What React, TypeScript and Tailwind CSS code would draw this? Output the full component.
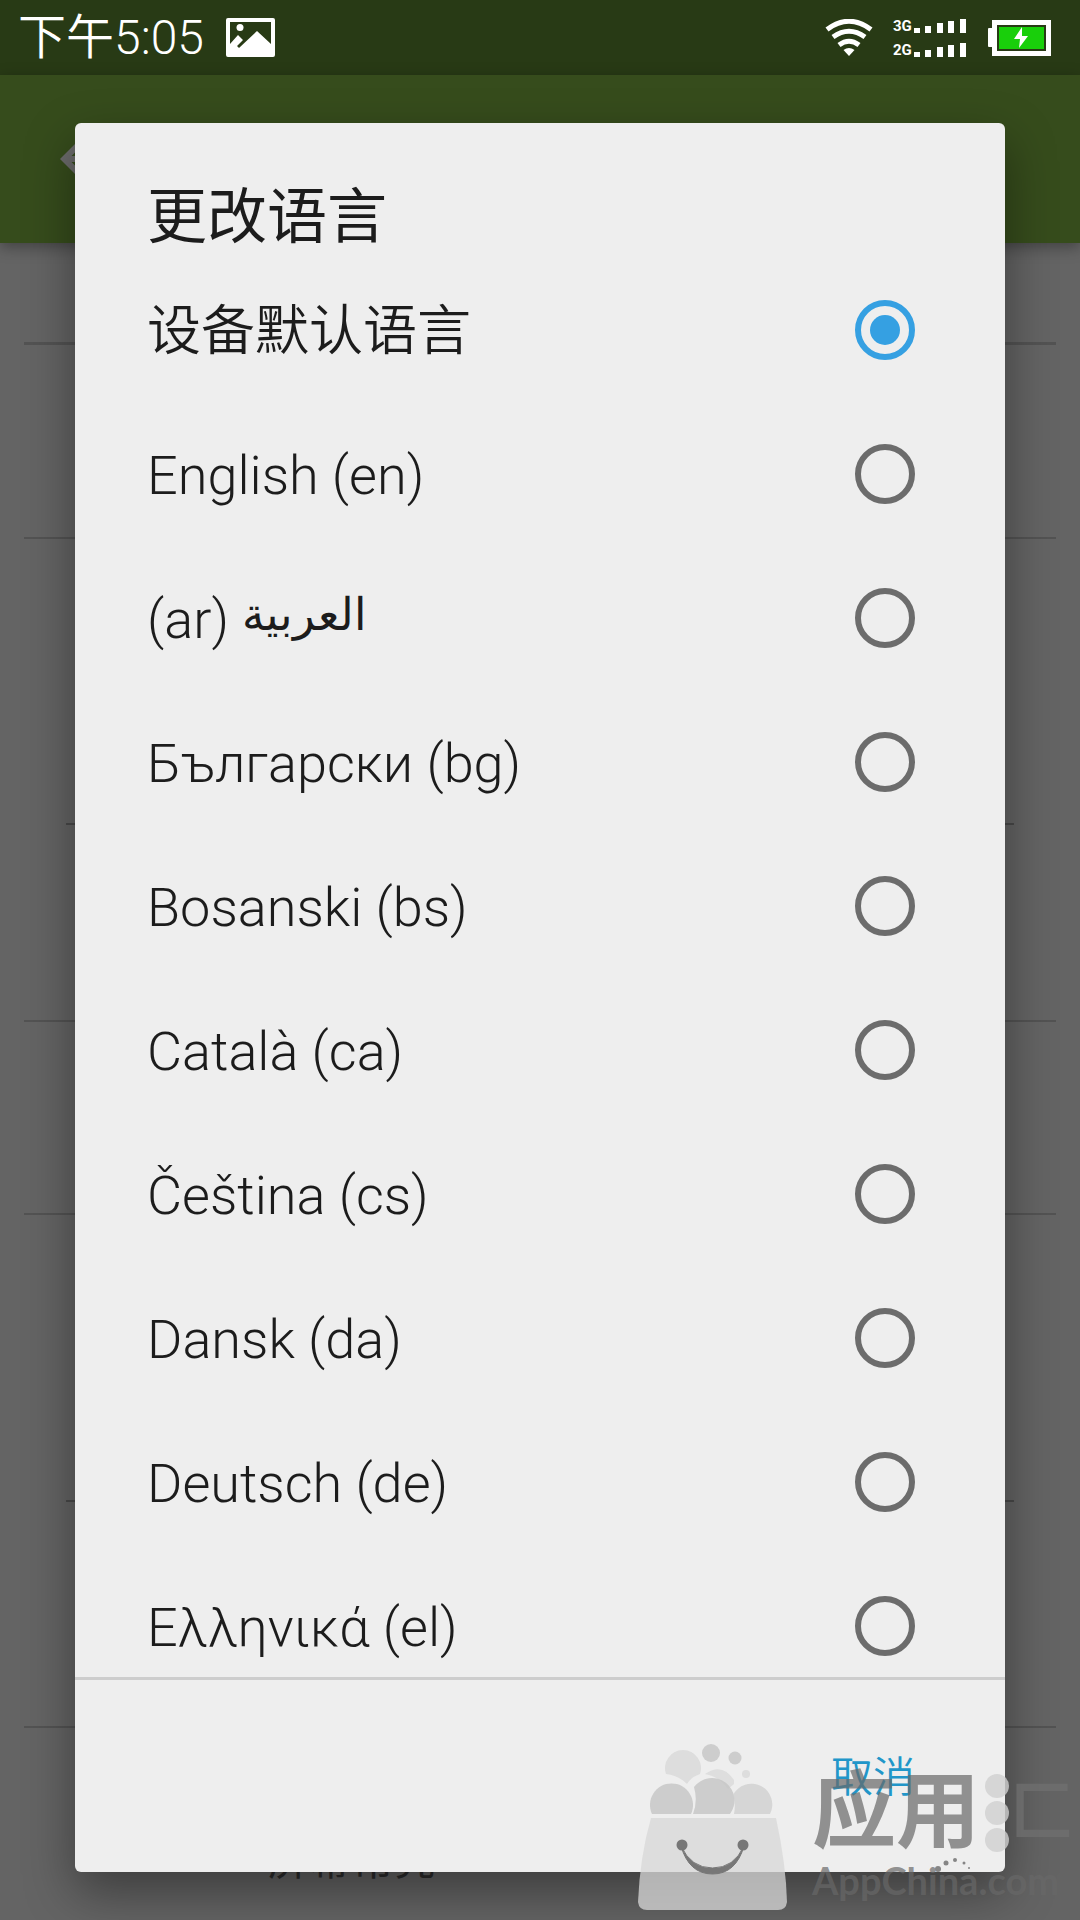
import { useState } from "react";

const LANGUAGES = [
  { id: "default", label: "设备默认语言" },
  { id: "en", label: "English (en)" },
  { id: "ar", label: "(ar) ", arabic: "العربية" },
  { id: "bg", label: "Български (bg)" },
  { id: "bs", label: "Bosanski (bs)" },
  { id: "ca", label: "Català (ca)" },
  { id: "cs", label: "Čeština (cs)" },
  { id: "da", label: "Dansk (da)" },
  { id: "de", label: "Deutsch (de)" },
  { id: "el", label: "Ελληνικά (el)" },
];

function PictureIcon() {
  return (
    <svg width="49" height="39" viewBox="0 0 49 39" fill="#fff" aria-hidden="true">
      <path fillRule="evenodd" d="M2 0H47Q49 0 49 2V37Q49 39 47 39H2Q0 39 0 37V2Q0 0 2 0ZM4 4V26L12 17L17 22L11 28L13 30L31 13L45 26V4Z" />
      <circle cx="14" cy="9.500" r="3.500" />
    </svg>
  );
}

function WifiIcon() {
  return (
    <svg width="48" height="38" viewBox="0 0 48 38" fill="none" stroke="#fff" strokeWidth="5" aria-hidden="true">
      <path d="M2 10.500Q24 -6 46 10.500" />
      <path d="M8 18Q24 6.500 40 18" />
      <path d="M14 26Q24 18.500 34 26" />
      <path d="M18.500 31Q24 27 29.500 31L24 37Z" fill="#fff" stroke="none" />
    </svg>
  );
}

function SignalBars() {
  return (
    <svg width="52" height="14" viewBox="0 0 52 14" fill="#fff" aria-hidden="true">
      <rect x="0" y="9" width="6" height="5" />
      <rect x="11" y="7" width="6" height="7" />
      <rect x="23" y="4" width="6" height="10" />
      <rect x="34" y="2" width="6" height="12" />
      <rect x="46" y="0" width="6" height="14" />
    </svg>
  );
}

function BatteryIcon() {
  return (
    <svg width="64" height="36" viewBox="0 0 64 36" aria-hidden="true">
      <rect x="0" y="8" width="5" height="19" rx="1" fill="#fff" />
      <rect x="6.500" y="2.500" width="54" height="31" fill="none" stroke="#fff" strokeWidth="5" />
      <rect x="11" y="7" width="45" height="22" fill="#19cf0b" />
      <rect x="10" y="6" width="47" height="24" fill="none" stroke="#283a15" strokeWidth="2" />
      <path d="M34 7L26 19H32L31 28L40 16H34Z" fill="#fff" />
    </svg>
  );
}

function StatusBar() {
  return (
    <header className="flex h-[75px] shrink-0 items-center bg-[#283a15] pl-[18px] pr-[28px] text-white">
      <time className="text-[48px] font-light leading-[75px]"><span className="font-[350]">下午</span>5:05</time>
      <span className="ml-[22px]"><PictureIcon /></span>
      <span className="ml-auto"><WifiIcon /></span>
      <div className="ml-5 flex flex-col gap-[10px] text-[15px] font-bold leading-[14px]">
        <div className="flex items-center gap-[1px]"><span className="w-5">3G</span><SignalBars /></div>
        <div className="flex items-center gap-[1px]"><span className="w-5">2G</span><SignalBars /></div>
      </div>
      <span className="ml-[22px]"><BatteryIcon /></span>
    </header>
  );
}

function SettingsBackdrop() {
  return (
    <div className="flex min-h-0 flex-1 flex-col" aria-hidden="true">
      <div className="z-10 flex h-[168px] shrink-0 items-center bg-[#364c1c] pl-[60px] shadow-[0_4px_14px_rgba(0,0,0,0.35)]">
        <svg width="48" height="48" viewBox="4 4 16 16" fill="#6b6b6b">
          <path d="M20 11H7.830L13.420 5.410L12 4L4 12L12 20L13.410 18.590L7.830 13H20Z" />
        </svg>
      </div>
      <div className="flex min-h-0 flex-1 flex-col overflow-hidden bg-[#646464] px-6">
        <div className="h-[102px] shrink-0 border-b-[3px] border-[#535353]" />
        <div className="h-[194px] shrink-0 border-b-2 border-[#535353]" />
        <div className="mx-[42px] h-[286px] shrink-0 border-b-2 border-[#494949]" />
        <div className="h-[197px] shrink-0 border-b-2 border-[#535353]" />
        <div className="h-[193px] shrink-0 border-b-2 border-[#535353]" />
        <div className="mx-[42px] h-[287px] shrink-0 border-b-2 border-[#494949]" />
        <div className="h-[226px] shrink-0 border-b-2 border-[#535353]" />
        <div className="pl-[244px] pt-[108px] text-[42px] leading-[50px] text-[#2c2c2c]">屏幕常亮</div>
      </div>
    </div>
  );
}

function LanguageDialog() {
  const [selected, setSelected] = useState("default");
  return (
    <div
      role="dialog"
      aria-labelledby="dialog-title"
      className="flex min-h-0 flex-1 flex-col overflow-hidden rounded-[6px] bg-[#eeeeee] shadow-[0_20px_50px_rgba(0,0,0,0.4)]"
    >
      <h1 id="dialog-title" className="shrink-0 px-[72px] pb-1 pt-[59px] text-[60px] leading-[72px] text-[#1c1c1c]">
        更改语言
      </h1>
      <div role="radiogroup" aria-labelledby="dialog-title" className="min-h-0 flex-1 overflow-hidden">
        {LANGUAGES.map((language) => (
          <label
            key={language.id}
            className="flex h-[144px] items-center justify-between pl-[72px] pr-[90px] text-[54px] font-[350] leading-[72px] text-[#1c1c1c]"
          >
            <span dir="ltr" className="pt-1">
              {language.label}
              {language.arabic && (
                <span lang="ar" className="align-[8px] text-[45px] leading-none">{language.arabic}</span>
              )}
            </span>
            <input
              type="radio"
              name="language"
              checked={selected === language.id}
              onChange={() => setSelected(language.id)}
              className="flex size-[60px] appearance-none items-center justify-center rounded-full border-[6px] border-[#6c6c6c] before:size-[30px] before:rounded-full checked:border-[#35a0e2] checked:before:bg-[#35a0e2]"
            />
          </label>
        ))}
      </div>
      <div className="flex h-[195px] shrink-0 items-center justify-end border-t-[3px] border-[#cdcdcd] pr-[90px]">
        <button type="button" className="pt-1 text-[42px] font-[350] leading-[60px] text-[#2196c9]">取消</button>
      </div>
    </div>
  );
}

function BagLogo() {
  return (
    <svg className="shrink-0" width="150" height="168" viewBox="0 0 150 168" aria-hidden="true">
      <g fill="#c4c4c4" fillOpacity="0.8">
        <circle cx="73" cy="9" r="9" />
        <circle cx="97" cy="14" r="6.500" />
        <circle cx="108" cy="30" r="4" fill="#d8d8d8" />
        <path d="M28 30A18 18 0 1 1 62 30Q53 33 49 40Q40 31 28 30Z" fill="#d8d8d8" />
        <path d="M67 30Q84 18 96 36V40L90 45Q82 33 67 30Z" fill="#dadada" />
        <path d="M14 70A21.500 21.500 0 1 1 53 70Z" />
        <path d="M56 43A22 22 0 0 1 92 70H55Q60 57 56 43Z" />
        <path d="M96 70Q98 60 95 51A20 20 0 0 1 132 70Z" fill="#d0d0d0" />
      </g>
      <path d="M13 74H138Q148 120 149 158Q148 166 140 166H9Q1 166 0 158Q2 112 13 74Z" fill="#d8d8d8" fillOpacity="0.76" />
      <circle cx="44" cy="101" r="5.500" fill="#777" />
      <circle cx="105" cy="101" r="5.500" fill="#777" />
      <path d="M43 102Q53 124 74.500 124Q96 124 106 102Q98 130 74.500 130Q51 130 43 102Z" fill="#777" stroke="#777" />
    </svg>
  );
}

function Watermark() {
  return (
    <div className="pointer-events-none absolute bottom-2 right-0 flex w-[442px] items-start gap-6" aria-hidden="true">
      <BagLogo />
      <div className="pt-6 text-[#686868]/70">
        <div className="flex h-[90px] items-center text-[84px] font-bold leading-[90px]">
          <span className="shrink-0">应用</span>
          <svg className="ml-1 shrink-0" width="26" height="78" viewBox="0 0 26 78" fill="#d0d0d0" fillOpacity="0.8">
            <circle cx="13" cy="12" r="12" />
            <circle cx="13" cy="39" r="12" />
            <circle cx="13" cy="66" r="12" />
          </svg>
          <span className="text-[64px] text-[#707070]/70">匚</span>
        </div>
        <div className="font-['Lato'] text-[38px] font-bold leading-[44px]">AppChina.com</div>
      </div>
      <svg className="absolute right-[108px] top-[112px]" width="40" height="16" viewBox="0 0 40 16" fill="#858585">
        <circle cx="6" cy="13" r="3" />
        <circle cx="14" cy="7" r="2.500" />
        <circle cx="23" cy="4" r="2" />
        <circle cx="32" cy="7" r="1.500" />
        <circle cx="37" cy="12" r="1" />
      </svg>
    </div>
  );
}

export default function App() {
  return (
    <main className="relative flex h-screen min-h-[1000px] flex-col overflow-hidden bg-[#646464] font-['Roboto','Noto_Sans_CJK_SC',sans-serif]">
      <StatusBar />
      <SettingsBackdrop />
      <div className="absolute inset-0 z-20 flex flex-col px-[75px] pb-12 pt-[123px]">
        <LanguageDialog />
      </div>
      <div className="pointer-events-none absolute inset-0 z-30">
        <Watermark />
      </div>
    </main>
  );
}
